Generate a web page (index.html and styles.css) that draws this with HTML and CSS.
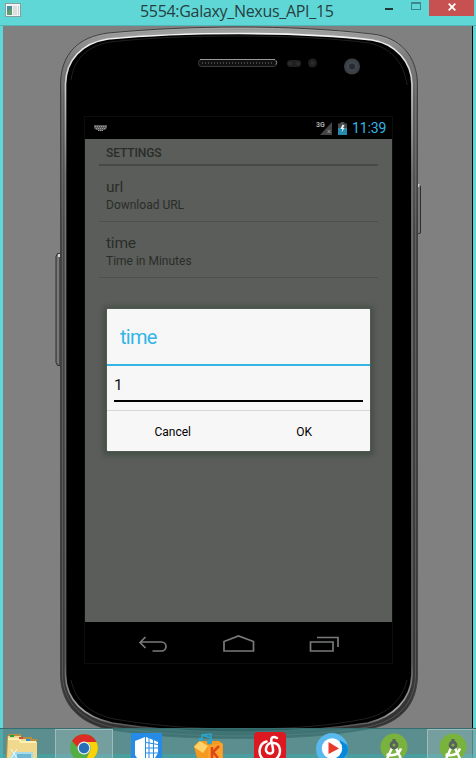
FILE: index.html
```
<!DOCTYPE html>
<html lang="en">
<head>
<meta charset="utf-8">
<title>5554:Galaxy_Nexus_API_15</title>
<link rel="stylesheet" href="styles.css">
</head>
<body>
<div class="window">
  <header class="titlebar">
    <svg class="app-icon" width="16" height="14" viewBox="0 0 16 14"><rect x=".5" y=".5" width="15" height="13" fill="#f4f4f4" stroke="#8b9c9c"/><rect x="2" y="3" width="5" height="9" fill="#4c8c9c"/><path d="M2 9l5-4v7H2z" fill="#5e9f70"/><path d="M8 3h4v9H8z" fill="#dedede"/><path d="M13 3h1v9h-1z" fill="#c9d0d0"/></svg>
    <h1 class="title">5554:Galaxy_Nexus_API_15</h1>
    <div class="controls">
      <span class="minimize"></span>
      <span class="maximize"></span>
      <span class="close"><svg width="8" height="8" viewBox="0 0 8 8"><path d="M.7.7l6.6 6.6M7.3.7L.7 7.3" stroke="#fff" stroke-width="1.8"/></svg></span>
    </div>
  </header>
  <main class="client">
    <svg class="phone" width="470" height="732" viewBox="3 26 470 732">
      <defs>
        <linearGradient id="rim" x1="0" y1="0" x2="0" y2="1"><stop offset="0" stop-color="#a8a8a8"/><stop offset=".04" stop-color="#7d7d7d"/><stop offset=".1" stop-color="#626262"/><stop offset=".3" stop-color="#444646"/><stop offset=".9" stop-color="#393939"/><stop offset="1" stop-color="#303030"/></linearGradient>
        <linearGradient id="edge" x1="0" y1="0" x2="0" y2="1"><stop offset="0" stop-color="#f4f4f4"/><stop offset=".06" stop-color="#d4d4d4"/><stop offset=".2" stop-color="#777"/><stop offset=".9" stop-color="#5c5c5c"/><stop offset=".97" stop-color="#aaa"/><stop offset="1" stop-color="#333"/></linearGradient>
      </defs>
      <path d="M60 253.500h-2.500l-1.500 3v106l1.500 3h2.500z" fill="#6d6d6d" stroke="#2f2f2f"/>
      <path d="M58 255v108" stroke="#858585"/>
      <path d="M58 254h2v3h-2z" fill="#d8d8d8"/>
      <path d="M417.500 185l3 1v47l-3 1z" fill="#777" stroke="#2d2d2d"/>
      <path d="M417.500 184h2v3h-2z" fill="#d0d0d0"/>
      <path d="M60.500 84C61 54 78 37 108 33C150 29 195 27 239 27S330 29 372 34C400 37 417 56 417.500 84V675C417 707 398 724 368 729C330 736 290 738.500 239 738.500S150 736 112 730C80 724 61 705 60.500 675Z" fill="url(#rim)" stroke="#404040"/>
      <path d="M62.500 84C63 56 80 39 108 35.500C150 31 195 29.500 239 29.500S330 31 372 36.500C398 40 415 58 415.500 84V675C415 705 396 721 368 727C330 733 290 736 239 736S150 733 112 727C82 721 63 702 62.500 675Z" fill="none" stroke="#888" stroke-opacity=".4"/>
      <path d="M65.500 84C66 60 82 43 108 39C150 35 195 33.500 239 33.500S330 35 372 40C396 44 411.500 62 412 84V675C411 700 393 717 368 723C330 729 290 732 239 732S150 729 112 723C84 717 66 700 65.500 675Z" fill="#000" stroke="url(#edge)" stroke-width="1.700"/>
      <path d="M71 80C74 58 88 46 110 42C150 37.500 195 36 239 36S330 38 366 42.500C390 46 404 62 407 85M71 680C76 703 92 714 114 719C150 725 190 729 239 729S330 726 364 719C388 714 402 700 407 680" fill="none" stroke="#202020"/>
      <rect x="198.500" y="59.500" width="78" height="7" rx="3" fill="#111" stroke="#3c3c3c"/>
      <path d="M200 59.500h75" stroke="#999"/>
      <path d="M202 63h72" stroke="#444" stroke-width="2" stroke-dasharray="1 2"/>
      <path d="M276 60.500q1.500 2 0 4" fill="none" stroke="#888"/>
      <rect x="287" y="60" width="14" height="7" rx="3.500" fill="#202020"/>
      <circle cx="290" cy="63.500" r="2" fill="#2b2b2b"/><circle cx="298" cy="63.500" r="2" fill="#2b2b2b"/>
      <circle cx="312.500" cy="63" r="4.500" fill="#202020"/><circle cx="312.500" cy="63" r="2" fill="#2d2d2d"/>
      <circle cx="352" cy="66.500" r="8" fill="#3b4047"/><circle cx="352" cy="66.500" r="5" fill="#42474e"/><circle cx="352" cy="66.500" r="3" fill="#282c32"/>
      <rect x="84.500" y="116.500" width="308" height="547" fill="none" stroke="#0d0d0d"/>
    </svg>
    <section class="screen">
      <div class="statusbar">
        <svg width="13" height="7" viewBox="0 0 13 7"><path d="M0 0h13v3l-2 2H9v1H4V5H2L0 3z" fill="#585858"/><path d="M1 1.500h11M2 3.500h9M4 5.500h5" stroke="#999" stroke-dasharray="1 1"/></svg>
        <div class="status-right">
          <span class="network">3G</span>
          <svg class="signal" width="12" height="13" viewBox="0 0 12 13"><path d="M12 0v13H0z" fill="#444"/><path d="M7.500 8l3 3m0-3l-3 3" stroke="#999"/></svg>
          <svg class="battery" width="9" height="13" viewBox="0 0 9 13"><path d="M2.500 0h4v1.500H9V13H0V1.500h2.500z" fill="#484b4d"/><path d="M0 6h9v7H0z" fill="#2689ad"/><path d="M4.500 2.500L2.500 7h2l-1 3.500 3-4.500H5l1.500-2.500z" fill="#e8f4f8"/></svg>
          <span class="clock">11:39</span>
        </div>
      </div>
      <div class="content">
        <h2 class="section-title">SETTINGS</h2>
        <div class="preference"><span class="name">url</span><span class="summary">Download URL</span></div>
        <div class="preference"><span class="name">time</span><span class="summary">Time in Minutes</span></div>
      </div>
      <nav class="navbar">
        <svg width="307" height="41" viewBox="0 0 307 41" fill="none" stroke="#777b77" stroke-width="1.700"><path d="M60.500 15L55 20.500l5.500 5.500M56 20h20.500a4.500 4.500 0 0 1 0 9H67.500"/><path d="M139 29v-9.500l14.500-5.500L168.500 19.500V29z"/><path d="M225.500 20h22.500v9h-22.500zM232 15.500h21V25"/></svg>
      </nav>
      <div class="dialog">
        <h2 class="dialog-title">time</h2>
        <div class="field-row"><div class="field">1</div></div>
        <div class="actions"><span>Cancel</span><span>OK</span></div>
      </div>
    </section>
  </main>
  <footer class="taskbar">
    <div class="task files"><svg width="34" height="24" viewBox="0 0 34 24"><path d="M2 3l2-3h12v3h11v2h5v19H1z" fill="#b68f40"/><path d="M3 2h13v3h8v3h8v16H2z" fill="#f0d98c"/><path d="M3 5h11l2 3h15" fill="none" stroke="#fff1b5" stroke-width="2"/><path d="M5 1h4v2H5z" fill="#20a040"/><path d="M14 3h4v2h-4z" fill="#d84836"/><path d="M21 5h4v2h-4z" fill="#2f8ddd"/><path d="M5 24l3-6h20v6z" fill="#a5dce8"/><path d="M12 20h14v4H12z" fill="#69b7d2"/><path d="M6 15l6 9M12 15L6 24" stroke="#e9fbff"/></svg></div>
    <div class="task chrome active"><svg width="28" height="24" viewBox="0 0 28 24"><circle cx="14" cy="14" r="14" fill="#53ae45"/><path d="M2 7A14 14 0 0 1 26.500 8H14a6 6 0 0 0-5 7z" fill="#dc2c25"/><path d="M14 8h12.500A14 14 0 0 1 15 28l5-11a6 6 0 0 0-6-9" fill="#fbd207"/><circle cx="14" cy="14" r="6.500" fill="#e8eef4"/><circle cx="14" cy="14" r="5.200" fill="#286fb9"/></svg></div>
    <div class="task tiles"><svg width="31" height="25" viewBox="0 0 31 25"><rect width="31" height="30" rx="1" fill="#258be7"/><path d="M4 8l10-4v21H6l-2-3z" fill="#fff"/><path d="M15 4l12 5v11l-3 5h-9z" fill="#fff"/><path d="M18 5v20M22.500 7v18M15 9.500l12 2M15 15h12M15 20h12" stroke="#258be7"/></svg></div>
    <div class="task music"><svg width="29" height="25" viewBox="0 0 29 25"><path d="M0 13l5-5h20l4 3v14H3z" fill="#f49a20"/><path d="M0 14l6-6 8 5-5 7z" fill="#ffd36a"/><path d="M14 13l14-3v15H14z" fill="#ffa22b"/><path d="M18 14v11M25 13l-6 6 5 6" stroke="#dc4916" stroke-width="2.600" fill="none"/><path d="M8 6V2l9-1v8M8 2l9 3" fill="none" stroke="#28a6cc" stroke-width="1.500"/><circle cx="6.500" cy="6.500" r="2" fill="#28a6cc"/><circle cx="15.500" cy="9" r="2.500" fill="#28a6cc"/></svg></div>
    <div class="task netease"><svg width="32" height="26" viewBox="0 0 32 26"><rect width="32" height="32" rx="4" fill="#dc1820"/><path d="M12.500 9.500C4 12 4 23 9 27M22 27C28 22 27 12 20 11C12 9 9 21 15.500 21.500C21 22 19 16 17.500 10C16.500 5 19 4 23 6" fill="none" stroke="#fff" stroke-width="2.500" stroke-linecap="round"/></svg></div>
    <div class="task player"><svg width="32" height="25" viewBox="0 0 32 25"><circle cx="16" cy="16" r="16" fill="#59b9ed"/><path d="M24 7l7 5q3 7-3 13H17z" fill="#0689dc"/><circle cx="16" cy="15.500" r="10.200" fill="#fff"/><path d="M12.500 9L23 15.500 12.500 21z" fill="#e93a2b"/></svg></div>
    <div class="task studio"><svg width="28" height="25" viewBox="0 0 28 25"><circle cx="14" cy="14" r="13.500" fill="#79b33d"/><path d="M6.500 21.500q11 3 14.500-6M12 15L6.500 27M16 15l5.500 12" fill="none" stroke="#fff" stroke-width="2.500"/><circle cx="14" cy="12" r="3" fill="none" stroke="#58625d" stroke-width="2.800"/><path d="M14 6v4" stroke="#58625d" stroke-width="3"/></svg></div>
    <div class="task studio last active"><svg width="28" height="25" viewBox="0 0 28 25"><circle cx="14" cy="14" r="13.500" fill="#79b33d"/><path d="M6.500 21.500q11 3 14.500-6M12 15L6.500 27M16 15l5.500 12" fill="none" stroke="#fff" stroke-width="2.500"/><circle cx="14" cy="12" r="3" fill="none" stroke="#58625d" stroke-width="2.800"/><path d="M14 6v4" stroke="#58625d" stroke-width="3"/></svg></div>
  </footer>
</div>
</body>
</html>
```
FILE: styles.css
```
* { box-sizing: border-box; }
body { margin: 0; font-family: Roboto, sans-serif; }
h1, h2 { margin: 0; font-weight: 400; }
svg { display: block; flex: none; }
.window { position: relative; width: 476px; height: 758px; overflow: hidden; background: #60d7d7; }
.titlebar { display: flex; height: 26px; padding-left: 5px; border-bottom: 1px solid #51b6b6; }
.app-icon { margin-top: 3px; }
.title { flex: 1; padding-left: 119px; font: 16px/22px "Open Sans", sans-serif; letter-spacing: -.31px; color: #263f40; white-space: nowrap; }
.controls { display: flex; width: 91px; }
.minimize { width: 8px; height: 2px; margin-top: 8px; background: #223638; }
.maximize { width: 10px; height: 8px; margin: 2px 8px 0 18px; border: 1px solid #3d8788; border-top-width: 2px; }
.close { display: grid; place-items: center; width: 45px; height: 16px; padding-bottom: 3px; background: #c75050; }
.client { position: relative; width: 470px; height: 732px; margin-left: 3px; padding: 91px 0 0 82px; background: #808080; border-right: 1px solid #000; overflow: hidden; }
.phone { position: absolute; left: 0; top: 0; }
.screen { position: relative; display: flex; flex-direction: column; width: 307px; height: 546px; }
.statusbar { display: flex; align-items: center; justify-content: space-between; height: 22px; padding: 0 6px 0 9px; background: #000; }
.status-right { display: flex; align-items: center; height: 22px; }
.network { align-self: flex-start; width: 8px; margin: 3px -4px 0 0; font: bold 7px/10px Roboto, sans-serif; color: #aaa; }
.signal { margin-right: 6px; }
.battery { margin-right: 5px; }
.clock { width: 34px; font-size: 14px; line-height: 22px; letter-spacing: -.1px; color: #33b5e5; white-space: nowrap; }
.content { flex: 1; padding: 0 14px; background: #5b5d5a; }
.section-title { height: 27px; padding-left: 7px; border-bottom: 2px solid #474947; font-size: 12px; line-height: 28px; letter-spacing: -.1px; font-weight: 500; color: #292d29; }
.preference { display: flex; flex-direction: column; height: 56px; padding: 11px 7px 0; border-bottom: 1px solid #4e504e; color: #292d29; }
.name { font-size: 15.5px; line-height: 20px; letter-spacing: -.2px; }
.summary { font-size: 12px; line-height: 16px; }
.navbar { height: 41px; }
.dialog { position: absolute; left: 22px; top: 192px; width: 263px; height: 142px; background: #f7f7f7; border-radius: 1px; box-shadow: 0 0 1px #b8bbb7, 0 1px 5px 4px #465047; }
.dialog-title { height: 57px; padding-left: 13px; border-bottom: 2px solid #33b5e5; font-size: 20px; line-height: 57px; letter-spacing: -.7px; color: #33b5e5; }
.field-row { height: 45px; padding: 0 7px; border-bottom: 1px solid #d7d7d7; }
.field { height: 36px; border-bottom: 2px solid #000; font-size: 15.5px; line-height: 39px; color: #111; }
.actions { display: grid; grid-template-columns: 1fr 1fr; text-align: center; font-size: 12px; line-height: 42px; color: #000; }
.taskbar { position: absolute; left: 0; bottom: 0; display: flex; width: 476px; height: 30px; background: linear-gradient(#489596a8 0 86%, #3ba6a8cc 88%); border-top: 1px solid #346d70; }
.task { display: flex; flex: none; justify-content: center; align-items: flex-end; }
.active { border: 1px solid #a0b9b9; border-bottom: 0; background: #b7c9c948; }
.files { width: 43px; margin-right: 12px; }
.chrome { width: 58px; }
.tiles { width: 31px; margin-left: 18px; }
.music { width: 29px; margin-left: 32px; }
.netease { width: 32px; margin-left: 31px; }
.player { width: 32px; margin-left: 30px; }
.studio { width: 28px; margin-left: 32px; }
.last { width: 52px; margin-left: 19px; }
```
